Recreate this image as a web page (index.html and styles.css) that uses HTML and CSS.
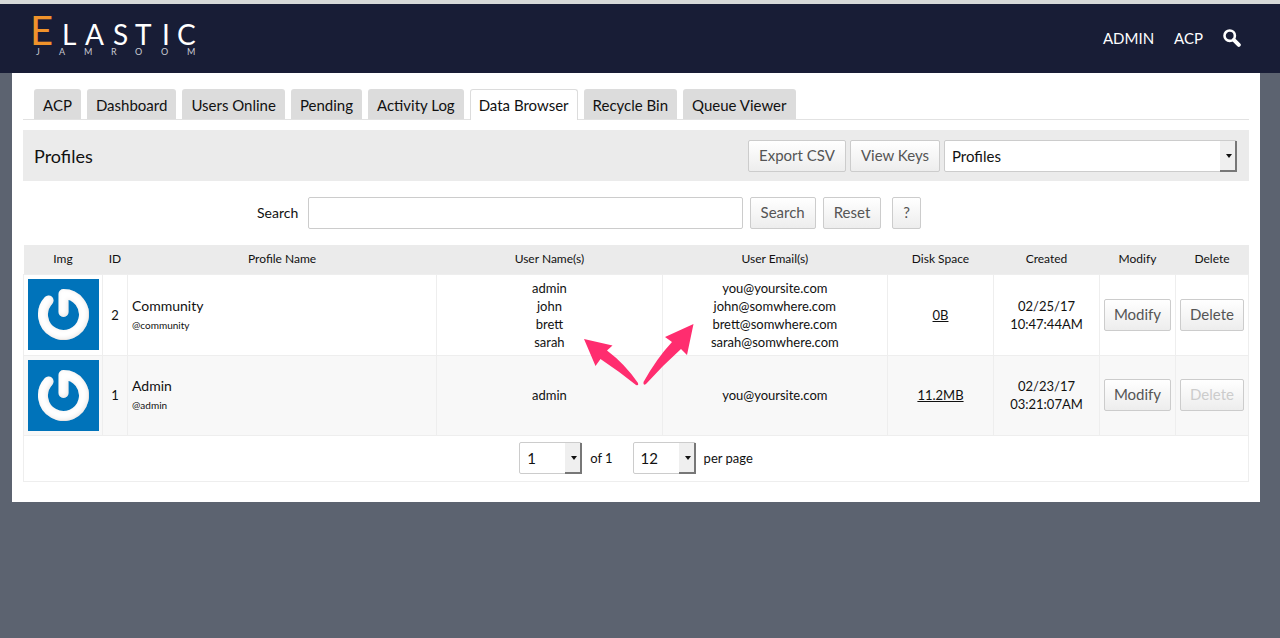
FILE: index.html
```
<!DOCTYPE html>
<html lang="en">
  <head>
    <meta charset="UTF-8" />
    <meta name="viewport" content="width=device-width, initial-scale=1.0" />
    <title>Data Browser - Profiles</title>
    <link rel="stylesheet" href="styles.css">
  </head>
  <body>
    <header class="header">
      <a href="#" class="logo" aria-label="Elastic Jamroom">
        <svg width="170" height="60" viewBox="0 0 170 60">
          <text class="logo-first" x="-1" y="37">E</text>
          <text class="logo-name" x="31 54 82 104 131 146" y="37">LASTIC</text>
          <text class="logo-sub" x="5 28 53 80 104 130 156" y="47">JAMROOM</text>
        </svg>
      </a>
      <nav class="menu">
        <a href="#">ADMIN</a>
        <a href="#">ACP</a>
        <a href="#" class="menu-search" aria-label="Search">
          <svg width="18" height="18" viewBox="0 0 18 18">
            <circle cx="6.7" cy="6.7" r="5.2" fill="none" stroke="#fff" stroke-width="2.6" />
            <path d="M10.8 10.8 L15.8 15.8" stroke="#fff" stroke-width="4" stroke-linecap="round" />
          </svg>
        </a>
      </nav>
    </header>

    <main class="wrapper">
      <nav class="tabs">
        <a href="#">ACP</a>
        <a href="#">Dashboard</a>
        <a href="#">Users Online</a>
        <a href="#">Pending</a>
        <a href="#">Activity Log</a>
        <a href="#" class="active">Data Browser</a>
        <a href="#">Recycle Bin</a>
        <a href="#">Queue Viewer</a>
      </nav>

      <div class="title-bar">
        <h1>Profiles</h1>
        <div class="title-actions">
          <button type="button">Export CSV</button>
          <button type="button">View Keys</button>
          <span class="select select-module">
            <select aria-label="Module">
              <option>Profiles</option>
            </select>
          </span>
        </div>
      </div>

      <form class="search">
        <label for="search">Search</label>
        <input type="text" id="search" name="search" />
        <button type="submit">Search</button>
        <button type="reset">Reset</button>
        <button type="button" class="help">?</button>
      </form>

      <table>
        <colgroup>
          <col class="col-img" />
          <col class="col-id" />
          <col />
          <col class="col-user" />
          <col class="col-user" />
          <col class="col-info" />
          <col class="col-info" />
          <col class="col-modify" />
          <col class="col-delete" />
        </colgroup>
        <thead>
          <tr>
            <th>Img</th>
            <th>ID</th>
            <th>Profile Name</th>
            <th>User Name(s)</th>
            <th>User Email(s)</th>
            <th>Disk Space</th>
            <th>Created</th>
            <th>Modify</th>
            <th>Delete</th>
          </tr>
        </thead>
        <tbody>
          <tr>
            <td>
              <svg class="avatar" viewBox="0 0 71 71">
                <defs>
                  <filter id="bevel" x="-10%" y="-10%" width="120%" height="120%">
                    <feGaussianBlur in="SourceAlpha" stdDeviation="2" result="blur" />
                    <feOffset in="blur" dx="-1" dy="-1" result="off" />
                    <feComposite in="SourceAlpha" in2="off" operator="out" result="edge" />
                    <feFlood flood-color="#d9cfca" flood-opacity="0.6" />
                    <feComposite in2="edge" operator="in" result="shade" />
                    <feMerge>
                      <feMergeNode in="SourceGraphic" />
                      <feMergeNode in="shade" />
                    </feMerge>
                  </filter>
                </defs>
                <rect width="71" height="71" fill="#0073ba" />
                <path id="power" d="M35.5 33 V15 A20.500 20.500 0 1 1 20.500 21.500" fill="none" stroke="#fff" stroke-width="10" stroke-linecap="round" stroke-linejoin="round" filter="url(#bevel)" />
              </svg>
            </td>
            <td>2</td>
            <td class="profile"><strong>Community</strong><small>@community</small></td>
            <td class="pointed">
              admin<br />john<br />brett<br />sarah
              <svg class="arrows" width="112" height="64" viewBox="0 0 112 64" fill="#ff2d6f">
                <path d="M1 16 L29.500 22.500 L24 27.500 Q42 41 55 60 Q56 63 53 62 Q37 49 17.500 36 L12.500 43 Z" />
                <path d="M110.500 1 L82 14 L89 19 Q74 35 60.500 59 Q60 63 63 61 Q79 43 98 26 L104 32 Z" />
              </svg>
            </td>
            <td>you@yoursite.com<br />john@somwhere.com<br />brett@somwhere.com<br />sarah@somwhere.com</td>
            <td><a href="#">0B</a></td>
            <td>02/25/17<br />10:47:44AM</td>
            <td><button type="button">Modify</button></td>
            <td><button type="button">Delete</button></td>
          </tr>
          <tr>
            <td>
              <svg class="avatar" viewBox="0 0 71 71">
                <rect width="71" height="71" fill="#0073ba" />
                <use href="#power" />
              </svg>
            </td>
            <td>1</td>
            <td class="profile"><strong>Admin</strong><small>@admin</small></td>
            <td>admin</td>
            <td>you@yoursite.com</td>
            <td><a href="#">11.2MB</a></td>
            <td>02/23/17<br />03:21:07AM</td>
            <td><button type="button">Modify</button></td>
            <td><button type="button" disabled>Delete</button></td>
          </tr>
        </tbody>
      </table>

      <div class="pager">
        <span class="select select-page">
          <select id="page" aria-label="Page">
            <option>1</option>
          </select>
        </span>
        <label for="page">of 1</label>
        <span class="select select-page">
          <select id="per-page">
            <option>12</option>
          </select>
        </span>
        <label for="per-page">per page</label>
      </div>
    </main>
  </body>
</html>
```
FILE: styles.css
```
* {
  box-sizing: border-box;
}

body {
  margin: 0;
  background-color: #5c6370;
  color: #111;
  font-family: Lato, "Open Sans", sans-serif;
  font-size: 13px;
  line-height: 18px;
}

/* Header */
.header {
  display: flex;
  justify-content: space-between;
  align-items: center;
  height: 73px;
  padding: 0 39px 2px 31px;
  border-top: 4px solid #d6d9d8;
  background-color: #181d36;
}

.logo svg {
  display: block;
  overflow: visible;
}

.logo text {
  fill: #fff;
}

.logo .logo-first {
  fill: #f0932b;
  font-size: 40px;
}

.logo-name {
  font-size: 28px;
}

.logo .logo-sub {
  fill: #c8cad2;
  font-size: 9px;
}

.menu {
  display: flex;
  align-items: center;
  gap: 20px;
}

.menu a {
  color: #fff;
  font-size: 15px;
  text-decoration: none;
}

.menu-search svg {
  display: block;
}

/* Page */
.wrapper {
  margin: 0 20px 20px 12px;
  padding: 16px 11px 20px;
  background-color: #fff;
}

.tabs {
  display: flex;
  gap: 6px;
  padding-left: 11px;
  border-bottom: 1px solid #e2e2e2;
}

.tabs a {
  height: 30px;
  padding: 0 9px;
  border-radius: 3px 3px 0 0;
  background-color: #dcdcdc;
  color: #111;
  font-size: 15px;
  line-height: 32px;
  text-decoration: none;
}

.tabs .active {
  height: 31px;
  margin-bottom: -1px;
  padding: 0 8px;
  border: 1px solid #dcdcdc;
  border-bottom: none;
  background-color: #fff;
  line-height: 30px;
}

.title-bar {
  display: flex;
  justify-content: space-between;
  align-items: center;
  height: 51px;
  margin-top: 10px;
  padding: 0 12px 0 11px;
  background-color: #ebebeb;
}

.title-bar h1 {
  margin: 0;
  font-size: 18px;
  font-weight: normal;
}

.title-actions {
  display: flex;
  gap: 4px;
}

button {
  height: 32px;
  padding: 0 10px 2px;
  border: 1px solid #ccc;
  border-radius: 2px;
  background: linear-gradient(#fff, #ededed);
  color: #555;
  font-family: inherit;
  font-size: 15px;
}

button:disabled {
  color: #ccc;
}

.select {
  position: relative;
  display: block;
}

.select select {
  appearance: none;
  display: block;
  width: 100%;
  height: 32px;
  padding: 0 20px 0 7px;
  border: 1px solid #ccc;
  border-radius: 2px;
  background-color: #fff;
  color: #111;
  font-family: inherit;
  font-size: 15px;
}

/* Drop-down button at the right end of the select */
.select::before {
  content: "";
  position: absolute;
  top: 1px;
  right: 0;
  width: 15px;
  height: 29px;
  border-right: 2px solid #777;
  border-bottom: 2px solid #777;
  background-color: #efefef;
  pointer-events: none;
}

.select::after {
  content: "";
  position: absolute;
  top: 14px;
  right: 5px;
  border: 3px solid transparent;
  border-top: 4px solid #111;
  border-bottom: none;
  pointer-events: none;
}

.select-module {
  width: 293px;
}

.search {
  display: flex;
  align-items: center;
  height: 64px;
  padding: 0 328px 0 234px;
}

.search label {
  margin-right: 10px;
  font-size: 14px;
}

.search input {
  flex: 1;
  min-width: 0;
  height: 32px;
  padding: 0 8px;
  border: 1px solid #ccc;
  border-radius: 2px;
  font-family: inherit;
  font-size: 15px;
}

.search button {
  margin-left: 7px;
}

.search .help {
  margin-left: 11px;
}

/* Profiles list */
table {
  width: 100%;
  table-layout: fixed;
  border-collapse: collapse;
}

.col-img {
  width: 79px;
}

.col-id {
  width: 25px;
}

.col-user {
  width: 18.4%;
}

.col-info {
  width: 106px;
}

.col-modify {
  width: 76px;
}

.col-delete {
  width: 73px;
}

th {
  height: 29px;
  padding: 0;
  background-color: #ebebeb;
  font-size: 12px;
  font-weight: normal;
}

td {
  height: 80px;
  padding: 4px;
  border: 1px solid #eee;
  text-align: center;
}

tbody tr:nth-child(even) {
  background-color: #f8f8f8;
}

td:nth-child(2) {
  padding: 0;
}

td a {
  color: #111;
}

td button {
  width: 100%;
  padding: 0 0 2px;
}

.avatar {
  display: block;
  width: 71px;
  height: 71px;
}

.profile {
  text-align: left;
}

.profile strong,
.profile small {
  display: block;
}

.profile strong {
  font-size: 14px;
  font-weight: normal;
  line-height: 20px;
}

.profile small {
  font-size: 10px;
}

.pointed {
  position: relative;
}

.arrows {
  position: absolute;
  top: 48px;
  right: -33px;
  z-index: 1;
}

.pager {
  display: flex;
  justify-content: center;
  align-items: center;
  gap: 8px;
  height: 46px;
  border: 1px solid #eee;
  border-top: none;
}

.select-page {
  width: 63px;
}

.pager label + .select-page {
  margin-left: 12px;
}
```
